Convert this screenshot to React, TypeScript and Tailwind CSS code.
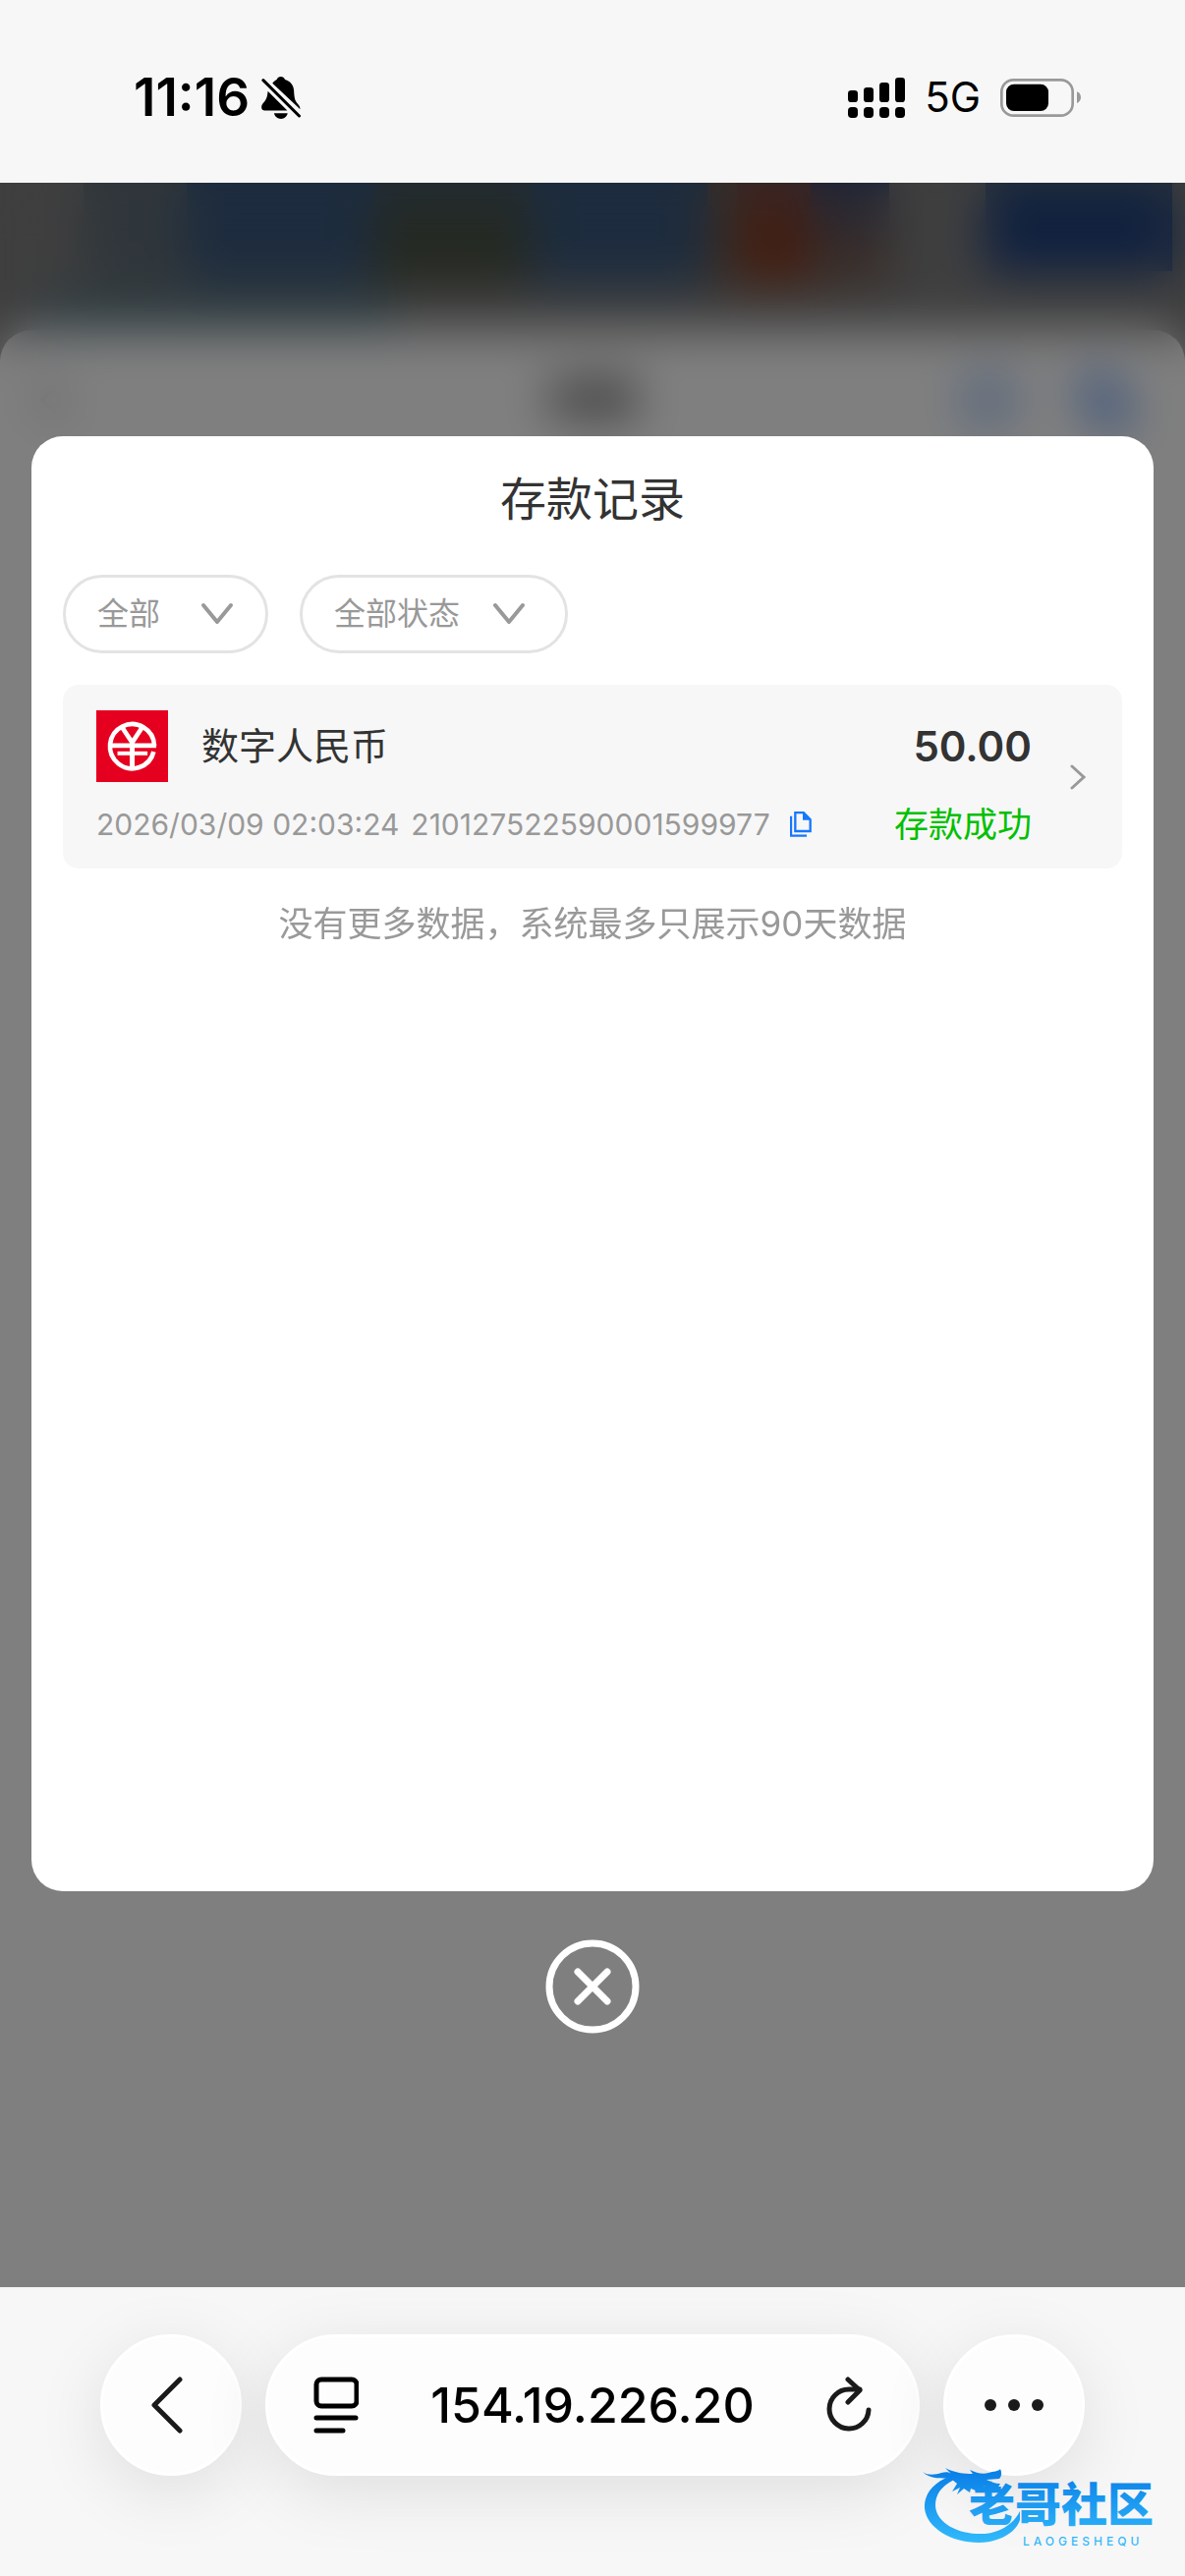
import React, { useState } from 'react';

const filters = [
  { id: 'type', label: '类型', options: ['全部'], box: 'w-[209px] pl-8 pr-8' },
  { id: 'status', label: '状态', options: ['全部状态'], box: 'w-[273px] pl-8 pr-10' },
];

const records = [
  {
    name: '数字人民币',
    time: '2026/03/09 02:03:24',
    orderNo: '210127522590001599977',
    amount: '50.00',
    status: '存款成功',
  },
];

function MutedBell() {
  return (
    <svg viewBox="500 80 118 128" className="h-[43px] w-10" fill="#000">
      <path d="M533 100 C538 94 543 91 546 89 C548 83 553 80 558 80 C564 80 569 83 571 89 C588 94 597 106 598 122 C599 140 600 150 606 158 C612 165 617 170 617 179 Z" />
      <path d="M519 124 C518 142 514 150 506 159 C500 165 500 170 500 174 C500 180 504 183 510 183 H578 Z" />
      <path d="M538 191 H579 C577 201 569 208 559 208 C548 208 540 201 538 191 Z" />
      <path d="M505 91 L614 199" stroke="#000" strokeWidth="9" strokeLinecap="round" />
    </svg>
  );
}

function Signal() {
  return (
    <svg viewBox="105 81 174 123" className="h-[41px] w-[58px]" fill="#000">
      <rect x="105" y="120" width="30" height="36" rx="10" />
      <rect x="153" y="111" width="30" height="45" rx="10" />
      <rect x="201" y="96" width="30" height="60" rx="10" />
      <rect x="249" y="81" width="30" height="75" rx="10" />
      <rect x="105" y="171" width="30" height="33" rx="11" />
      <rect x="153" y="171" width="30" height="33" rx="11" />
      <rect x="201" y="171" width="30" height="33" rx="11" />
      <rect x="249" y="171" width="30" height="33" rx="11" />
    </svg>
  );
}

function Battery() {
  return (
    <svg viewBox="564 84 246 117" className="h-[39px] w-[82px]">
      <rect x="568" y="88" width="217" height="109" rx="36" fill="none" stroke="#999" strokeWidth="8" />
      <rect x="582" y="101" width="129" height="82" rx="24" fill="#000" />
      <path d="M798 124 C806 127 810 134 810 141 C810 149 806 156 798 159 Z" fill="#999" />
    </svg>
  );
}

function StatusBar() {
  return (
    <header className="flex h-[186px] shrink-0 items-center justify-between bg-[#f7f7f7] pt-3 pr-[106px] pl-[136px]">
      <div className="flex items-center gap-3">
        <span className="text-[53px] leading-none font-semibold text-black">11:16</span>
        <MutedBell />
      </div>
      <div className="flex items-center gap-5">
        <Signal />
        <span className="text-[42px] leading-none text-black">5G</span>
        <Battery />
      </div>
    </header>
  );
}

/* the deposit page that sits behind the dialog */
function PageBehind() {
  return (
    <div className="flex flex-col bg-[#7e7e7e] [grid-area:1/1]" aria-hidden="true">
      <div className="flex h-[104px] items-start">
        <div className="h-full w-[85px]" />
        <div className="h-full w-[105px] bg-[#5f6c76]" />
        <div className="h-full w-[190px] bg-[#3a587c]" />
        <div className="h-full w-[160px] bg-linear-to-b from-[#465868] to-[#4a5242] to-50%" />
        <div className="h-full w-[180px] bg-[#3a587c]" />
        <div className="h-full w-[30px] bg-[#6e5c50]" />
        <div className="h-full w-[75px] bg-linear-to-b from-[#704c4c] to-[#863c22] to-50%" />
        <div className="h-full w-[80px] bg-linear-to-b from-[#3c4a70] to-[#745a50] to-70%" />
        <div className="h-full w-[98px]" />
        <div className="h-[90px] w-[190px] bg-linear-to-b from-[#465c78] to-[#1e407e] to-40%" />
      </div>
      <div className="flex h-[46px] items-end px-10">
        <div className="h-9 w-[360px] bg-[#5a7680]" />
      </div>
      <div className="flex-1 rounded-t-[32px] bg-white">
        <div className="flex items-center justify-between pt-9 pr-[54px] pl-10">
          <svg viewBox="0 0 24 40" className="h-10 w-6" fill="none" stroke="#555" strokeWidth="5">
            <path d="M21 3 L4 20 L21 37" />
          </svg>
          <span className="pl-[162px] text-[46px] font-bold text-[#222]">存款</span>
          <div className="flex gap-[68px]">
            <svg viewBox="0 0 52 52" className="size-13" fill="none" stroke="#3d84f5" strokeWidth="8">
              <circle cx="26" cy="26" r="21" />
            </svg>
            <svg viewBox="0 0 52 52" className="size-13" fill="none" stroke="#3d84f5" strokeWidth="9">
              <path d="M6 5 H32 V30 H6 Z M20 38 H46 V48 H20 Z" />
            </svg>
          </div>
        </div>
      </div>
    </div>
  );
}

function DcepLogo() {
  return (
    <svg viewBox="55 70 220 220" className="size-[73px]">
      <rect x="55" y="70" width="220" height="220" fill="#e6001f" />
      <g fill="none" stroke="#fff" strokeWidth="14">
        <path d="M233 178 A68 68 0 1 0 231 197" />
        <path d="M132 119 L165 169 L198 119" />
        <path d="M97 178 H239" />
        <path d="M120 202 H212" strokeWidth="12" />
        <path d="M165 164 V246" strokeWidth="15" />
      </g>
    </svg>
  );
}

function CopyIcon() {
  return (
    <svg viewBox="69 66 66 78" className="h-[26px] w-[22px]" fill="none" stroke="#1677ff" strokeWidth="7">
      <path d="M72 80 V140 H120" />
      <path d="M85 69 H110 L131 91 V126 H85 Z" />
      <path d="M108 69 V92 H132 Z" fill="#1677ff" stroke="none" />
    </svg>
  );
}

function RecordCard({ record }: { record: (typeof records)[number] }) {
  return (
    <li className="flex items-center rounded-[16px] bg-[#f7f7f7] py-[26px] pr-9 pl-[34px]">
      <div className="flex-1">
        <div className="flex items-center gap-[34px]">
          <DcepLogo />
          <span className="flex-1 text-[38px] leading-[73px] text-[#333]">{record.name}</span>
          <span className="text-[42px] leading-[73px] font-semibold text-[#333]">{record.amount}</span>
        </div>
        <div className="mt-6 flex h-[38px] items-center">
          <span className="text-[30px] text-[#999]">{record.time}</span>
          <span className="ml-3 text-[30px] text-[#999]">{record.orderNo}</span>
          <button type="button" aria-label="复制" className="ml-5">
            <CopyIcon />
          </button>
          <span className="ml-auto text-[35px] text-[#00c000]">{record.status}</span>
        </div>
      </div>
      <button type="button" aria-label="详情" className="ml-[38px]">
        <svg viewBox="0 0 18 26" className="h-[26px] w-[18px]" fill="none" stroke="#999" strokeWidth="3" strokeLinecap="round">
          <path d="M3 2 L15 13 L3 24" />
        </svg>
      </button>
    </li>
  );
}

function RecordsDialog({ onClose }: { onClose: () => void }) {
  return (
    <div className="flex flex-col items-center bg-black/50 px-8 py-[258px] backdrop-blur-[24px] [grid-area:1/1]">
      <section role="dialog" aria-label="存款记录" className="w-full flex-1 rounded-[32px] bg-white px-8">
        <h1 className="pt-8 text-center text-[47px] leading-[64px] text-[#333]">存款记录</h1>
        <div className="mt-[45px] flex gap-8">
          {filters.map((f) => (
            <div key={f.id} className={`flex h-20 items-center rounded-full border-3 border-[#e3e3e3] ${f.box}`}>
              <select id={f.id} aria-label={f.label} className="min-w-0 flex-1 appearance-none bg-transparent text-[32px] text-[#999] outline-none">
                {f.options.map((o) => (
                  <option key={o}>{o}</option>
                ))}
              </select>
              <svg viewBox="0 0 34 24" className="h-6 w-[34px] shrink-0" fill="none" stroke="#999" strokeWidth="4" strokeLinecap="round" strokeLinejoin="round">
                <path d="M3 3 L17 20 L31 3" />
              </svg>
            </div>
          ))}
        </div>
        <ul className="mt-8">
          {records.map((r) => (
            <RecordCard key={r.orderNo} record={r} />
          ))}
        </ul>
        <p className="mt-[30px] text-center text-[35px] leading-[52px] text-[#999]">没有更多数据，系统最多只展示90天数据</p>
      </section>
      <button type="button" aria-label="关闭" onClick={onClose} className="mt-[49px]">
        <svg viewBox="0 0 96 96" className="size-24" fill="none" stroke="#fff" strokeLinecap="round">
          <circle cx="48" cy="48" r="44" strokeWidth="7" />
          <path d="M33 33 L63 63 M63 33 L33 63" strokeWidth="7" />
        </svg>
      </button>
    </div>
  );
}

function CommunityMark() {
  return (
    <svg viewBox="0 0 252 86" className="absolute right-4 bottom-7 h-[86px] w-[252px]">
      <defs>
        <linearGradient id="mark" gradientUnits="userSpaceOnUse" x1="0" y1="8" x2="0" y2="78">
          <stop offset="0" stopColor="#0a80e8" />
          <stop offset="1" stopColor="#30b8fa" />
        </linearGradient>
      </defs>
      <g fill="url(#mark)">
        <path d="M34 11 C12 17 2 31 3 45 C5 65 30 80 58 80 C78 80 96 70 100 57 V48 C92 64 75 72 56 71 C32 70 14 57 14 42 C14 28 24 19 40 13 Z" />
        <path d="M1 8 C6 12 14 11 20 9 C24 8 28 8 30 10 L24 4 C33 9 44 10 52 10 L49 6 C56 9 62 11 68 9 C73 7 78 8 80 5 C82 9 81 13 79 15 L66 16 C70 18 75 20 80 20 L77 25 C70 25 67 22 63 23 L68 27 L58 24 L60 29 L50 25 L49 29 L43 25 L36 31 L39 24 L31 28 L36 20 L30 15 C22 14 8 16 1 8 Z" />
        <text x="48" y="58" fontSize="47" fontWeight="900">老哥社区</text>
        <text x="103" y="83" fontSize="12" fontWeight="500" className="tracking-[4px]">LAOGESHEQU</text>
      </g>
    </svg>
  );
}

function BrowserBar() {
  const round = 'flex size-36 shrink-0 items-center justify-center rounded-full border-3 border-white bg-[#fdfdfd] shadow-[0_16px_70px_rgba(0,0,0,0.1)]';
  return (
    <footer className="relative flex h-[294px] shrink-0 items-start gap-6 overflow-hidden bg-[#f7f7f7] px-[102px] pt-12">
      <button type="button" aria-label="后退" className={round}>
        <svg viewBox="0 0 32 58" className="mr-2 h-[58px] w-8" fill="none" stroke="#1a1a1a" strokeWidth="5" strokeLinecap="round" strokeLinejoin="round">
          <path d="M29 3 L3 29 L29 55" />
        </svg>
      </button>
      <div className="flex h-36 flex-1 items-center justify-between rounded-full border-3 border-white bg-[#fdfdfd] px-[46px] shadow-[0_16px_70px_rgba(0,0,0,0.1)]">
        <button type="button" aria-label="页面菜单">
          <svg viewBox="0 0 46 58" className="h-[58px] w-[46px]" fill="none" stroke="#000" strokeWidth="5" strokeLinecap="round">
            <rect x="3" y="3" width="41" height="27" rx="5" />
            <path d="M3 42 H43 M3 55 H30" />
          </svg>
        </button>
        <span className="text-[50px] leading-none font-medium text-black">154.19.226.20</span>
        <button type="button" aria-label="刷新">
          <svg viewBox="0 0 46 58" className="h-[58px] w-[46px]" fill="none" stroke="#1a1a1a" strokeWidth="5" strokeLinecap="round" strokeLinejoin="round">
            <path d="M43 34 A20 20 0 1 1 23 13 H34" />
            <path d="M22 3 L34 14 L22 26" />
          </svg>
        </button>
      </div>
      <button type="button" aria-label="更多" className={round}>
        <svg viewBox="0 0 60 12" className="h-3 w-[60px]" fill="#1a1a1a">
          <circle cx="6" cy="6" r="6" />
          <circle cx="30" cy="6" r="6" />
          <circle cx="54" cy="6" r="6" />
        </svg>
      </button>
      <CommunityMark />
    </footer>
  );
}

export default function App() {
  const [open, setOpen] = useState(true);

  return (
    <div className="flex min-h-screen flex-col font-[Inter,'Noto_Sans_CJK_SC',sans-serif]">
      <StatusBar />
      <main className="grid flex-1 overflow-hidden">
        <PageBehind />
        {open && <RecordsDialog onClose={() => setOpen(false)} />}
      </main>
      <BrowserBar />
    </div>
  );
}
